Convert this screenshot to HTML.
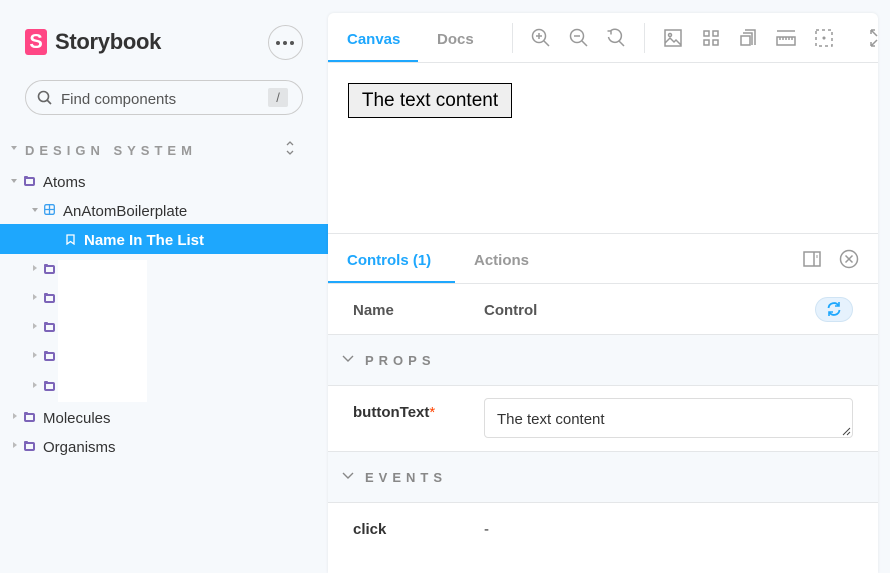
<!DOCTYPE html>
<html><head><meta charset="utf-8"><style>
*{box-sizing:border-box;margin:0;padding:0}
body{width:890px;height:565px;overflow:hidden;background:#f6f9fc;font-family:"Liberation Sans",sans-serif;position:relative;color:#333}
.a{position:absolute}
.tri{position:absolute;width:0;height:0}
.trd{border-left:3px solid transparent;border-right:3px solid transparent;border-top:4px solid #aaa}
.trr{border-top:3px solid transparent;border-bottom:3px solid transparent;border-left:4px solid #bbb}
.fold{position:absolute;width:11px;height:9px;border:2px solid #7c64b8;border-radius:2px}
.fold:before{content:"";position:absolute;left:-2px;top:-3px;width:4px;height:2px;background:#7c64b8;border-radius:1px 1px 0 0}
.tree{position:absolute;font-size:15px;color:#333}
.ic{position:absolute;fill:none;stroke:#999;stroke-width:1.5}
.hr{position:absolute;left:328px;width:550px;height:1px;background:#e4e6e8}
</style></head><body>
<div class="a" style="left:25px;top:29px;width:22px;height:26px;background:#ff4785;border-radius:3px"></div>
<div class="a" style="left:25px;top:28px;width:22px;height:26px;color:#fff;font-weight:bold;font-size:20px;text-align:center;line-height:28px">S</div>
<div class="a" style="left:55px;top:29px;font-size:22px;font-weight:bold;color:#333;letter-spacing:-0.3px">Storybook</div>
<div class="a" style="left:268px;top:25px;width:35px;height:35px;border:1px solid #ccc;border-radius:50%"></div>
<div class="a" style="left:276px;top:41px;width:4px;height:4px;border-radius:50%;background:#555"></div>
<div class="a" style="left:283px;top:41px;width:4px;height:4px;border-radius:50%;background:#555"></div>
<div class="a" style="left:290px;top:41px;width:4px;height:4px;border-radius:50%;background:#555"></div>
<div class="a" style="left:25px;top:80px;width:278px;height:35px;border:1px solid #ccc;border-radius:18px;background:#f6f9fc"></div>
<svg class="a" style="left:37px;top:90px" width="16" height="16"><circle cx="6.5" cy="6.5" r="5" fill="none" stroke="#666" stroke-width="1.6"/><path d="M10 10l4 4" stroke="#666" stroke-width="1.6"/></svg>
<div class="a" style="left:61px;top:91px;font-size:15px;color:#555">Find components</div>
<div class="a" style="left:268px;top:88px;width:20px;height:19px;background:#e2e4e6;border-radius:2px;text-align:center;font-size:13px;line-height:19px;color:#666">/</div>
<div class="tri trd" style="left:11px;top:146px"></div>
<div class="a" style="left:25px;top:143px;font-size:13px;font-weight:bold;letter-spacing:5px;color:#999">DESIGN SYSTEM</div>
<svg class="a" style="left:284px;top:140px" width="12" height="16"><path d="M3 5l3-3 3 3M3 11l3 3 3-3" fill="none" stroke="#888" stroke-width="1.3"/></svg>
<div class="tri trd" style="left:11px;top:179px"></div>
<div class="fold" style="left:24px;top:177px"></div>
<div class="tree" style="left:43px;top:174px">Atoms</div>
<div class="tri trd" style="left:32px;top:208px"></div>
<svg class="a" style="left:44px;top:204px" width="11" height="11"><rect x="0.7" y="0.7" width="9.6" height="9.6" rx="1.5" fill="none" stroke="#3ba0f0" stroke-width="1.3"/><path d="M5.5 1v9M1 5.5h9" stroke="#3ba0f0" stroke-width="1.3"/></svg>
<div class="tree" style="left:63px;top:203px">AnAtomBoilerplate</div>
<div class="a" style="left:0;top:224px;width:328px;height:30px;background:#1ea7fd"></div>
<svg class="a" style="left:66px;top:234px" width="9" height="11"><path d="M1 1h7v9L4.5 7.5 1 10z" fill="none" stroke="#fff" stroke-width="1.3"/></svg>
<div class="a" style="left:84px;top:232px;font-size:15px;font-weight:bold;color:#fff">Name In The List</div>
<div class="a" style="left:58px;top:260px;width:89px;height:142px;background:#fff"></div>
<div class="tri trr" style="left:33px;top:265px"></div><div class="fold" style="left:44px;top:265px"></div>
<div class="tri trr" style="left:33px;top:294px"></div><div class="fold" style="left:44px;top:294px"></div>
<div class="tri trr" style="left:33px;top:323px"></div><div class="fold" style="left:44px;top:323px"></div>
<div class="tri trr" style="left:33px;top:352px"></div><div class="fold" style="left:44px;top:352px"></div>
<div class="tri trr" style="left:33px;top:382px"></div><div class="fold" style="left:44px;top:382px"></div>
<div class="tri trr" style="left:13px;top:413px"></div><div class="fold" style="left:24px;top:413px"></div>
<div class="tree" style="left:43px;top:410px">Molecules</div>
<div class="tri trr" style="left:13px;top:442px"></div><div class="fold" style="left:24px;top:442px"></div>
<div class="tree" style="left:43px;top:439px">Organisms</div>
<div class="a" style="left:328px;top:13px;width:550px;height:560px;background:#fff;border-radius:6px 6px 0 0;box-shadow:0 0 3px rgba(0,0,0,0.08)"></div>
<div class="a" style="left:347px;top:31px;font-size:15px;font-weight:bold;color:#1ea7fd">Canvas</div>
<div class="a" style="left:437px;top:31px;font-size:15px;font-weight:bold;color:#999">Docs</div>
<div class="a" style="left:328px;top:60px;width:90px;height:3px;background:#1ea7fd"></div>
<div class="hr" style="top:62px"></div>
<div class="a" style="left:512px;top:23px;width:1px;height:30px;background:#e4e6e8"></div>
<div class="a" style="left:644px;top:23px;width:1px;height:30px;background:#e4e6e8"></div>
<svg class="ic" style="left:531px;top:28px" width="20" height="20"><circle cx="8" cy="8" r="6.5"/><path d="M13 13l5 5M5 8h6M8 5v6"/></svg>
<svg class="ic" style="left:569px;top:28px" width="20" height="20"><circle cx="8" cy="8" r="6.5"/><path d="M13 13l5 5M5 8h6"/></svg>
<svg class="ic" style="left:606px;top:28px" width="20" height="20"><path d="M4 3.5A6.5 6.5 0 1 1 2.5 9M1.5 3h3.5v3.5M13 13l5 5"/></svg>
<svg class="ic" style="left:664px;top:29px" width="18" height="18"><rect x="1" y="1" width="16" height="16"/><path d="M1 14l5-5 4 4 2-2 5 5"/><circle cx="6" cy="6" r="1.5"/></svg>
<svg class="ic" style="left:703px;top:30px" width="16" height="16"><rect x="1" y="1" width="5" height="5"/><rect x="10" y="1" width="5" height="5"/><rect x="1" y="10" width="5" height="5"/><rect x="10" y="10" width="5" height="5"/></svg>
<svg class="ic" style="left:740px;top:29px" width="17" height="17"><rect x="1" y="7" width="9" height="9"/><path d="M3 4h9v12M5 1h10v15"/></svg>
<svg class="ic" style="left:776px;top:29px" width="20" height="18"><path d="M1 2h18M1 8h18v8H1zM4 8v3M7 8v3M10 8v3M13 8v3M16 8v3"/></svg>
<svg class="ic" style="left:815px;top:29px" width="18" height="18"><rect x="1" y="1" width="16" height="16" stroke-dasharray="3 3"/><circle cx="9" cy="9" r="0.8" fill="#999"/></svg>
<svg class="ic" style="left:870px;top:29px" width="8" height="18"><path d="M1 1l6 6M1 1v4M1 1h4M1 17l6-6M1 17v-4M1 17h4"/></svg>
<div class="a" style="left:348px;top:83px;width:164px;height:35px;border:1px solid #000;background:#efefef;font-size:19px;color:#000;line-height:34px;text-align:center">The text content</div>
<div class="hr" style="top:233px"></div>
<div class="a" style="left:347px;top:252px;font-size:15px;font-weight:bold;color:#1ea7fd">Controls (1)</div>
<div class="a" style="left:474px;top:252px;font-size:15px;font-weight:bold;color:#999">Actions</div>
<div class="a" style="left:328px;top:281px;width:127px;height:3px;background:#1ea7fd"></div>
<div class="hr" style="top:283px"></div>
<svg class="ic" style="left:803px;top:251px" width="18" height="16"><rect x="1" y="1" width="16" height="14"/><path d="M11 1v14"/><path d="M14 4v3" stroke-width="1"/></svg>
<svg class="ic" style="left:839px;top:249px" width="20" height="20"><circle cx="10" cy="10" r="8.5"/><path d="M6.5 6.5l7 7M13.5 6.5l-7 7"/></svg>
<div class="a" style="left:353px;top:302px;font-size:15px;font-weight:bold;color:#555">Name</div>
<div class="a" style="left:484px;top:302px;font-size:15px;font-weight:bold;color:#555">Control</div>
<div class="a" style="left:815px;top:297px;width:38px;height:25px;border-radius:13px;background:#e6f2fd;border:1px solid #d0e4f4"></div>
<svg class="a" style="left:825px;top:300px" width="18" height="18"><path d="M3.5 8a5.5 5.5 0 0 1 10-2.5M14.5 10a5.5 5.5 0 0 1-10 2.5" fill="none" stroke="#1ea7fd" stroke-width="1.8"/><path d="M14 2v4h-4M4 16v-4h4" fill="none" stroke="#1ea7fd" stroke-width="1.6"/></svg>
<div class="hr" style="top:334px"></div>
<div class="a" style="left:328px;top:335px;width:550px;height:50px;background:#f6f9fc"></div>
<svg class="a" style="left:342px;top:355px" width="12" height="8"><path d="M1 1l5 5 5-5" fill="none" stroke="#888" stroke-width="1.4"/></svg>
<div class="a" style="left:365px;top:353px;font-size:13px;font-weight:bold;letter-spacing:5px;color:#888">PROPS</div>
<div class="hr" style="top:385px"></div>
<div class="a" style="left:353px;top:404px;font-size:15px;font-weight:bold;color:#333">buttonText<span style="color:#ff4400;font-weight:normal">*</span></div>
<div class="a" style="left:484px;top:398px;width:369px;height:40px;border:1px solid #ddd;border-radius:4px;font-size:15px;color:#333;padding:12px 12px">The text content</div>
<svg class="a" style="left:841px;top:426px" width="10" height="10"><path d="M2 9l7-7M6 9l3-3" stroke="#444" stroke-width="1"/></svg>
<div class="hr" style="top:451px"></div>
<div class="a" style="left:328px;top:452px;width:550px;height:50px;background:#f6f9fc"></div>
<svg class="a" style="left:342px;top:472px" width="12" height="8"><path d="M1 1l5 5 5-5" fill="none" stroke="#888" stroke-width="1.4"/></svg>
<div class="a" style="left:365px;top:470px;font-size:13px;font-weight:bold;letter-spacing:5px;color:#888">EVENTS</div>
<div class="hr" style="top:502px"></div>
<div class="a" style="left:353px;top:521px;font-size:15px;font-weight:bold;color:#333">click</div>
<div class="a" style="left:484px;top:521px;font-size:15px;color:#333">-</div>
</body></html>
